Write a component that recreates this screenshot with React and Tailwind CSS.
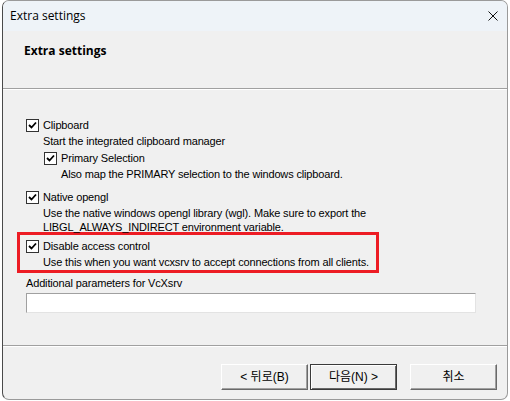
import { useState } from 'react'

const body = { fontFamily: '"Liberation Sans", Arial, "Noto Sans CJK KR", sans-serif' }
const ui = { fontFamily: '"Open Sans", "Noto Sans", "Liberation Sans", sans-serif' }
const kr = { fontFamily: '"Liberation Sans", "Noto Sans CJK KR", sans-serif' }

function CheckBox({ checked }) {
  return (
    <span className="w-[13px] h-[13px] shrink-0 border border-[#333] bg-white flex items-center justify-center">
      {checked && (
        <svg width="9" height="9" viewBox="0 0 9 9">
          <path d="M1 4 L3.5 6.5 L8 1.5" fill="none" stroke="#000" strokeWidth="1.8" />
        </svg>
      )}
    </span>
  )
}

function Option({ label, indent, children, className = '' }) {
  const [on, setOn] = useState(true)
  return (
    <div className={className}>
      <label className={`flex items-center gap-[4px] h-[14px] ${indent ? 'pl-[18px]' : ''}`} onClick={() => setOn(!on)}>
        <CheckBox checked={on} />
        <span>{label}</span>
      </label>
      {children && <div className={`${indent ? 'pl-[35px]' : 'pl-[17px]'} mt-[2px] whitespace-nowrap`}>{children}</div>}
    </div>
  )
}

function WinButton({ children, primary, className = '' }) {
  return (
    <button
      style={kr}
      className={`w-[87px] h-[26px] text-[12px] text-black bg-[#f0f0f0] ${primary ? 'border border-[#3a3a3a] shadow-[inset_1px_1px_0_#fff,inset_-1px_-1px_0_#696969]' : 'border border-t-white border-l-white border-r-[#696969] border-b-[#696969] shadow-[inset_-1px_-1px_0_#a0a0a0]'} ${className}`}
    >
      {children}
    </button>
  )
}

export default function App() {
  return (
    <div className="w-[510px] h-[401px] bg-white overflow-hidden">
      <div className="ml-[2px] w-[506px] h-[400px] rounded-t-[7px] rounded-b-[7px] border border-[#9a9a9a] border-l-[#4a4a4a] bg-[#f0f0f0] flex flex-col overflow-hidden">
        <div style={ui} className="h-[30px] shrink-0 bg-[#eef3f8] flex items-center justify-between pl-[7px] pr-[8px] text-[12px] text-black">
          <span>Extra settings</span>
          <svg width="10" height="10" viewBox="0 0 10 10" className="mr-[1px]">
            <path d="M0.5 0.5 L9.5 9.5 M9.5 0.5 L0.5 9.5" stroke="#111" strokeWidth="1" />
          </svg>
        </div>

        <div className="h-[58px] shrink-0 pl-[21px] pt-[6px] border-b border-[#a0a0a0]">
          <span style={ui} className="text-[12px] font-bold text-black">Extra settings</span>
        </div>
        <div className="h-px bg-white" />

        <div style={body} className="flex-1 pl-[23px] pt-[28px] text-[11px] leading-[14px] tracking-[-0.15px] text-black">
          <Option label="Clipboard">
            <p>Start the integrated clipboard manager</p>
          </Option>
          <Option label="Primary Selection" indent className="mt-[3px]">
            <p>Also map the PRIMARY selection to the windows clipboard.</p>
          </Option>
          <Option label="Native opengl" className="mt-[9px]">
            <p>Use the native windows opengl library (wgl). Make sure to export the</p>
            <p>LIBGL_ALWAYS_INDIRECT environment variable.</p>
          </Option>
          <div className="-ml-[9px] -mt-[2px] w-[362px] border-[3px] border-[#ed1c24] pl-[6px] pt-[4px] pb-[1px]">
            <Option label="Disable access control">
              <p>Use this when you want vcxsrv to accept connections from all clients.</p>
            </Option>
          </div>
          <p className="mt-[3px]">Additional parameters for VcXsrv</p>
          <input className="mt-[3px] w-[450px] h-[20px] bg-white border border-t-[#a0a0a0] border-l-[#a0a0a0] border-r-[#e3e3e3] border-b-[#e3e3e3] outline-none px-1" />
        </div>

        <div className="h-px bg-[#a0a0a0]" />
        <div className="h-px bg-white" />
        <div className="h-[52px] shrink-0 flex items-start justify-end gap-[2px] pr-[10px] pt-[17px]">
          <WinButton>&lt; 뒤로(B)</WinButton>
          <WinButton primary>다음(N) &gt;</WinButton>
          <WinButton className="ml-[11px]">취소</WinButton>
        </div>
      </div>
    </div>
  )
}
